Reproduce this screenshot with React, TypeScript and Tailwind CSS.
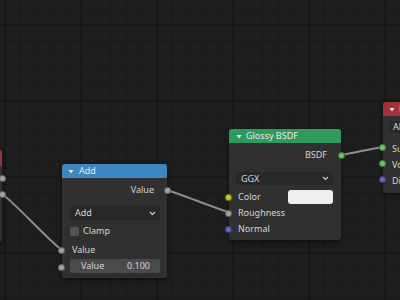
import React from "react";

const font = { fontFamily: '"Noto Sans", "DejaVu Sans", sans-serif' };

function Socket({ side, color, top }: { side: "left" | "right"; color: string; top: number }) {
  return (
    <span
      className={`absolute h-[7px] w-[7px] rounded-full border border-black/40 ${side === "left" ? "left-[-4px]" : "right-[-4px]"}`}
      style={{ top: top - 3.5, backgroundColor: color }}
    />
  );
}

function Chevron() {
  return (
    <svg width="7" height="5" viewBox="0 0 7 5" className="mr-[2px]">
      <path d="M1 1 L3.5 3.5 L6 1" stroke="#d0d0d0" strokeWidth="1.1" fill="none" />
    </svg>
  );
}

function Tri() {
  return (
    <svg width="6" height="5" viewBox="0 0 6 5">
      <path d="M0.5 1 L5.5 1 L3 4.5 Z" fill="#e8e8e8" />
    </svg>
  );
}

function Grid() {
  const minorX: number[] = [];
  const minorY: number[] = [];
  for (let i = 0; i < 28; i++) {
    minorX.push(5 + i * 15.2);
    minorY.push(-5 + i * 15.2);
  }
  const majorX = [5, 81, 157, 233, 309, 385];
  const majorY = [25, 101, 177, 253];
  return (
    <svg className="absolute inset-0" width="400" height="300">
      {minorX.map((x) => (
        <line key={"mx" + x} x1={x} y1={0} x2={x} y2={300} stroke="#1b1b1b" strokeWidth="1" />
      ))}
      {minorY.map((y) => (
        <line key={"my" + y} x1={0} y1={y} x2={400} y2={y} stroke="#1b1b1b" strokeWidth="1" />
      ))}
      {majorX.map((x) => (
        <line key={"Mx" + x} x1={x} y1={0} x2={x} y2={300} stroke="#151515" strokeWidth="1.2" />
      ))}
      {majorY.map((y) => (
        <line key={"My" + y} x1={0} y1={y} x2={400} y2={y} stroke="#151515" strokeWidth="1.2" />
      ))}
    </svg>
  );
}

function Wires() {
  return (
    <svg className="absolute inset-0" width="400" height="300">
      <g stroke="#8c8c8c" strokeWidth="2" fill="none" strokeLinecap="round">
        <path d="M2 194 C 12 200, 52 244, 62 250" />
        <path d="M167 190 C 180 194, 215 208, 228 212" />
        <path d="M341 155 C 352 153, 371 149, 382 147" />
      </g>
    </svg>
  );
}

export default function App() {
  return (
    <div className="relative h-[300px] w-[400px] overflow-hidden bg-[#1e1e1e] text-[9px] text-[#d6d6d6]" style={font}>
      <Grid />
      <Wires />

      {/* left partial node */}
      <div className="absolute left-[-100px] top-[150px] h-[92px] w-[102px] rounded-[3px] bg-[#303030] shadow-[0_2px_4px_rgba(0,0,0,0.5)]">
        <div className="h-[16px] rounded-t-[3px] bg-[#a1303b]" />
        <Socket side="right" color="#a1a1a1" top={28} />
        <Socket side="right" color="#a1a1a1" top={44} />
      </div>

      {/* Add node */}
      <div className="absolute left-[62px] top-[164px] flex w-[105px] flex-col rounded-[3px] bg-[#303030] pb-[5px] shadow-[0_2px_5px_rgba(0,0,0,0.55)]">
        <div className="flex h-[14px] items-center gap-[5px] rounded-t-[3px] bg-[#3d86bf] pl-[6px] text-[#e8e8e8]">
          <Tri />
          <span>Add</span>
        </div>
        <div className="mt-[5px] flex h-[14px] items-center justify-end pr-[13px]">Value</div>
        <div className="ml-[8px] mr-[7px] mt-[9px] flex h-[14px] items-center justify-between rounded-[2px] bg-[#282828] pl-[5px] pr-[2px]">
          <span>Add</span>
          <Chevron />
        </div>
        <div className="ml-[8px] mt-[4px] flex h-[14px] items-center gap-[4px]">
          <span className="h-[9px] w-[9px] rounded-[2px] bg-[#545454]" />
          <span>Clamp</span>
        </div>
        <div className="ml-[10px] mt-[5px] flex h-[14px] items-center">Value</div>
        <div className="ml-[8px] mr-[7px] mt-[2px] flex h-[14px] items-center justify-between rounded-[2px] bg-[#4a4a4a] pl-[11px] pr-[10px]">
          <span>Value</span>
          <span>0.100</span>
        </div>
        <Socket side="right" color="#a1a1a1" top={26} />
        <Socket side="left" color="#a1a1a1" top={86} />
        <Socket side="left" color="#a1a1a1" top={103} />
      </div>

      {/* Glossy BSDF node */}
      <div className="absolute left-[229px] top-[129px] flex w-[112px] flex-col rounded-[3px] bg-[#303030] pb-[3px] shadow-[0_2px_5px_rgba(0,0,0,0.55)]">
        <div className="flex h-[14px] items-center gap-[4px] rounded-t-[3px] bg-[#2f9a5e] pl-[7px] text-[#e8e8e8]">
          <Tri />
          <span>Glossy BSDF</span>
        </div>
        <div className="mt-[5px] flex h-[14px] items-center justify-end pr-[14px]">BSDF</div>
        <div className="ml-[7px] mr-[8px] mt-[10px] flex h-[13px] items-center justify-between rounded-[2px] bg-[#282828] pl-[5px] pr-[2px]">
          <span>GGX</span>
          <Chevron />
        </div>
        <div className="mt-[4px] flex h-[16px] items-center justify-between pl-[9px] pr-[8px]">
          <span>Color</span>
          <span className="h-[14px] w-[45px] rounded-[3px] bg-[#eeeeee]" />
        </div>
        <div className="flex h-[16px] items-center pl-[9px]">Roughness</div>
        <div className="flex h-[16px] items-center pl-[9px]">Normal</div>
        <Socket side="right" color="#63c763" top={26} />
        <Socket side="left" color="#c7c729" top={68} />
        <Socket side="left" color="#a1a1a1" top={84} />
        <Socket side="left" color="#6363c7" top={100} />
      </div>

      {/* right partial node */}
      <div className="absolute left-[383px] top-[102px] flex w-[110px] flex-col rounded-[3px] bg-[#303030] pb-[4px] shadow-[0_2px_5px_rgba(0,0,0,0.55)]">
        <div className="flex h-[14px] items-center gap-[4px] rounded-t-[3px] bg-[#a1303b] pl-[6px] text-[#e8e8e8]">
          <Tri />
          <span>Material Output</span>
        </div>
        <div className="ml-[6px] mt-[5px] flex h-[12px] items-center rounded-[2px] bg-[#282828] pl-[4px]">All</div>
        <div className="mt-[8px] flex h-[16px] items-center pl-[9px]">Surface</div>
        <div className="flex h-[16px] items-center pl-[9px]">Volume</div>
        <div className="flex h-[16px] items-center pl-[9px]">Displacement</div>
        <Socket side="left" color="#63c763" top={45} />
        <Socket side="left" color="#63c763" top={61} />
        <Socket side="left" color="#6363c7" top={77} />
      </div>
    </div>
  );
}
